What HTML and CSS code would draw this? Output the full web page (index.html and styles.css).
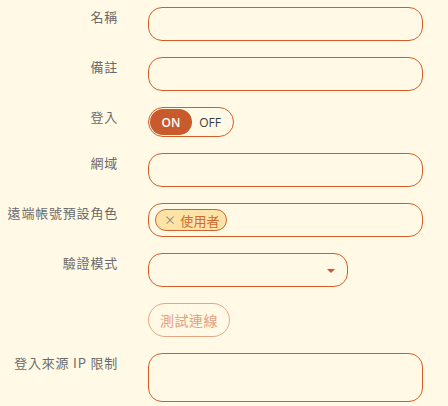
FILE: index.html
```html
<!DOCTYPE html>
<html lang="zh-Hant">
<head>
<meta charset="utf-8">
<link rel="stylesheet" href="styles.css">
</head>
<body>
<form class="form">
  <div class="row">
    <label class="label">名稱</label>
    <div class="field"><div class="input"></div></div>
  </div>
  <div class="row">
    <label class="label">備註</label>
    <div class="field"><div class="input"></div></div>
  </div>
  <div class="row row-toggle">
    <label class="label">登入</label>
    <div class="field">
      <div class="toggle">
        <span class="opt on">ON</span>
        <span class="opt off">OFF</span>
      </div>
    </div>
  </div>
  <div class="row">
    <label class="label">網域</label>
    <div class="field"><div class="input"></div></div>
  </div>
  <div class="row">
    <label class="label">遠端帳號預設角色</label>
    <div class="field">
      <div class="input tags">
        <span class="tag"><span class="x">×</span>使用者</span>
      </div>
    </div>
  </div>
  <div class="row">
    <label class="label">驗證模式</label>
    <div class="field">
      <div class="input select"><span class="caret"></span></div>
    </div>
  </div>
  <div class="row">
    <div class="label"></div>
    <div class="field"><button type="button" class="btn">測試連線</button></div>
  </div>
  <div class="row">
    <label class="label">登入來源 IP 限制</label>
    <div class="field"><div class="input area"></div></div>
  </div>
</form>
</body>
</html>
```
FILE: styles.css
```css
html, body {
  margin: 0;
  padding: 0;
  background: #fff9e6;
}
body {
  font-family: "Noto Sans CJK TC", "Noto Sans", sans-serif;
  color: #666;
}
.form {
  display: flex;
  flex-direction: column;
  gap: 16px;
  padding-top: 7px;
}
.row {
  display: flex;
  align-items: flex-start;
}
.label {
  width: 118px;
  flex: none;
  padding-right: 30px;
  text-align: right;
  font-size: 13px;
  letter-spacing: 0.8px;
  line-height: 20px;
  padding-top: 0;
  color: #6a6a6a;
  font-weight: 400;
}
.field {
  flex: none;
}
.input {
  box-sizing: border-box;
  width: 275px;
  height: 34px;
  border: 1px solid #d45d27;
  border-radius: 14px;
  background: #fff9e6;
}
.tags {
  display: flex;
  align-items: center;
  padding-left: 6px;
}
.tag {
  box-sizing: border-box;
  height: 22px;
  display: inline-flex;
  align-items: center;
  padding: 0 6px 0 8px;
  border: 1px solid #d0642c;
  border-radius: 11px;
  background: #fde3a5;
  color: #cf6a30;
  font-size: 13px;
  letter-spacing: 0.2px;
  line-height: 1;
}
.tag .x {
  color: #8d8778;
  font-size: 12px;
  margin-right: 4px;
}
.select {
  width: 200px;
  position: relative;
}
.caret {
  position: absolute;
  right: 12px;
  top: 15px;
  width: 0;
  height: 0;
  border-left: 4px solid transparent;
  border-right: 4px solid transparent;
  border-top: 4px solid #c9582a;
}
.area {
  height: 49px;
}
.toggle {
  box-sizing: border-box;
  width: 86px;
  height: 30px;
  border: 1px solid #d45d27;
  border-radius: 15px;
  display: flex;
  align-items: stretch;
  padding: 1px;
  font-family: "Open Sans", "Noto Sans", sans-serif;
  font-size: 12px;
}
.opt {
  display: flex;
  align-items: center;
  justify-content: center;
}
.on {
  width: 42px;
  background: #c85a2b;
  color: #fff;
  border-radius: 14px;
  font-weight: 600;
}
.off {
  flex: 1;
  color: #3a3a3a;
  padding-right: 4px;
}
.btn {
  box-sizing: border-box;
  width: 82px;
  height: 34px;
  border: 1px solid #eaa582;
  border-radius: 17px;
  background: #fff9e6;
  color: #e59e7a;
  font-family: "Noto Sans CJK TC", "Noto Sans", sans-serif;
  font-size: 14px;
  padding: 0;
  letter-spacing: 0.5px;
}
```
